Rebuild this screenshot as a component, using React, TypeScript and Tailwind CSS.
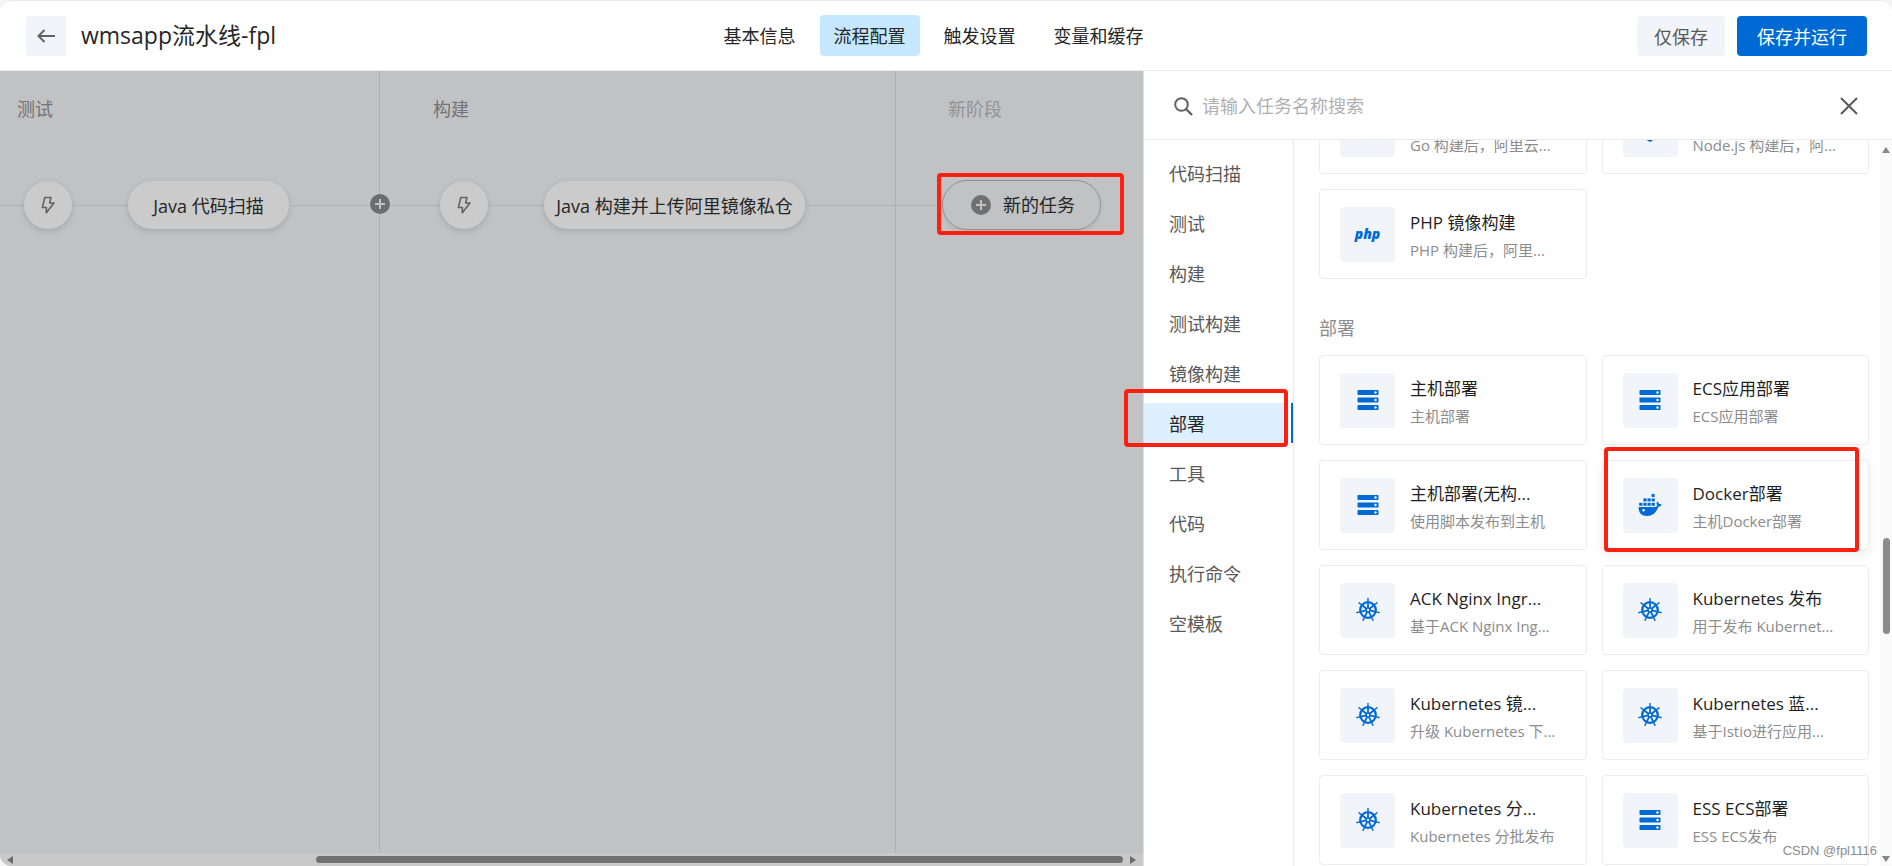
import type { ReactNode } from "react";

const navItems = ["基本信息", "流程配置", "触发设置", "变量和缓存"];

const categories = [
  "代码扫描",
  "测试",
  "构建",
  "测试构建",
  "镜像构建",
  "部署",
  "工具",
  "代码",
  "执行命令",
  "空模板",
];

type IconName = "server" | "docker" | "helm" | "php" | "go" | "node";

interface ITask {
  icon: IconName;
  title?: string;
  desc: string;
  hovered?: boolean;
}

const imageBuildTasks: ITask[] = [
  { icon: "go", desc: "Go 构建后，阿里云..." },
  { icon: "node", desc: "Node.js 构建后，阿..." },
  { icon: "php", title: "PHP 镜像构建", desc: "PHP 构建后，阿里..." },
];

const deployTasks: ITask[] = [
  { icon: "server", title: "主机部署", desc: "主机部署" },
  { icon: "server", title: "ECS应用部署", desc: "ECS应用部署" },
  { icon: "server", title: "主机部署(无构...", desc: "使用脚本发布到主机" },
  { icon: "docker", title: "Docker部署", desc: "主机Docker部署", hovered: true },
  { icon: "helm", title: "ACK Nginx Ingr...", desc: "基于ACK Nginx Ing..." },
  { icon: "helm", title: "Kubernetes 发布", desc: "用于发布 Kubernet..." },
  { icon: "helm", title: "Kubernetes 镜...", desc: "升级 Kubernetes 下..." },
  { icon: "helm", title: "Kubernetes 蓝...", desc: "基于Istio进行应用..." },
  { icon: "helm", title: "Kubernetes 分...", desc: "Kubernetes 分批发布" },
  { icon: "server", title: "ESS ECS部署", desc: "ESS ECS发布" },
];

const ServerIcon = () => (
  <svg width="22" height="22" viewBox="0 0 22 22" fill="#006ad4">
    {[1, 8.5, 16].map((y) => (
      <g key={y}>
        <rect x="0.5" y={y} width="21" height="5" rx="0.8" />
        <circle cx="18.5" cy={y + 2.5} r="1.2" fill="#fff" />
      </g>
    ))}
  </svg>
);

const DockerIcon = () => (
  <svg width="24" height="24" viewBox="0 0 24 24" fill="#006ad4">
    <rect x="13.6" y="1" width="3" height="3" />
    {[5.4, 9.5, 13.6].map((x) => (
      <rect key={x} x={x} y="5.4" width="3.2" height="3" />
    ))}
    {[1.2, 5.4, 9.5, 13.6].map((x) => (
      <rect key={x} x={x} y="9.8" width="3.2" height="3" />
    ))}
    <path d="M0.6 14h16.2c1.4 0 2.2-.7 2.4-1.7-.9-1.2-.8-2.7 0-3.8 1 .6 1.7 1.5 1.8 2.5 1-.2 2 0 2.7.5-.6 1.5-1.8 2.2-3.4 2.2C18.6 19.5 14.6 23 8.9 23 3.5 23 .4 19.6.6 14z" />
    <circle cx="5.6" cy="17.2" r="1.2" fill="#fff" />
  </svg>
);

const HelmIcon = () => (
  <svg width="24" height="24" viewBox="0 0 24 24" fill="none" stroke="#006ad4">
    <circle cx="12" cy="12" r="7.8" strokeWidth="2.2" />
    {[0, 1, 2, 3, 4, 5, 6].map((i) => (
      <g key={i} transform={`rotate(${(i * 360) / 7} 12 12)`}>
        <path d="M12 10V4" strokeWidth="1.8" />
        <path d="M12 4V0.5" strokeWidth="1.4" strokeLinecap="round" />
      </g>
    ))}
    <circle cx="12" cy="12" r="2" strokeWidth="1.6" />
  </svg>
);

const TaskIcon = ({ name }: { name: IconName }) => {
  if (name === "server") return <ServerIcon />;
  if (name === "docker") return <DockerIcon />;
  if (name === "helm") return <HelmIcon />;
  if (name === "php") {
    return (
      <span className="text-sm leading-none font-extrabold italic text-[#006ad4]">
        php
      </span>
    );
  }
  return (
    <svg width="24" height="26" viewBox="0 0 24 26" fill="#006ad4">
      {name === "node" ? (
        <path d="M12 0l10 6v14l-10 6L2 20V6z" />
      ) : (
        <path d="M3 8h18v8H3z" />
      )}
    </svg>
  );
};

const TaskCard = ({ task }: { task: ITask }) => (
  <button
    type="button"
    className={
      task.hovered
        ? "flex h-[90px] items-center gap-[15px] rounded border border-[#ebedf0] bg-white pl-5 text-left shadow-[0_4px_12px_rgba(0,0,0,0.08)]"
        : "flex h-[90px] items-center gap-[15px] rounded border border-[#ebedf0] bg-white pl-5 text-left"
    }
  >
    <span className="flex size-[55px] shrink-0 items-center justify-center rounded bg-[#f1f4f8]">
      <TaskIcon name={task.icon} />
    </span>
    <span className="flex min-w-0 flex-col pt-[3px] whitespace-nowrap">
      <span className="min-h-7 text-[17px] leading-7 text-[#1f1f1f]">
        {task.title}
      </span>
      <span className="text-[15px] leading-[26px] text-[#8c8c8c]">
        {task.desc}
      </span>
    </span>
  </button>
);

const PlusDot = ({ fill }: { fill: string }) => (
  <svg className="shrink-0" width="20" height="20" viewBox="0 0 20 20">
    <circle cx="10" cy="10" r="10" fill={fill} />
    <path d="M10 5v10M5 10h10" stroke="#c1c2c4" strokeWidth="2" />
  </svg>
);

const Trigger = () => (
  <button
    type="button"
    aria-label="触发"
    className="flex size-12 shrink-0 items-center justify-center rounded-full bg-[#cbcbcb] shadow-[0_2px_6px_rgba(0,0,0,0.14)]"
  >
    <svg
      width="16"
      height="18"
      viewBox="0 0 16 18"
      fill="none"
      stroke="#636363"
      strokeWidth="1.6"
      strokeLinejoin="round"
    >
      <path d="M4.800 1.500h6.200L9.600 7h4.400L6.300 16.700V11.500H2.300z" />
    </svg>
  </button>
);

const Wire = ({ className }: { className: string }) => (
  <span className={`h-px bg-[#aeb3b8] ${className}`} />
);

const Job = ({ children }: { children: ReactNode }) => (
  <button
    type="button"
    className="h-12 shrink-0 rounded-full bg-[#cbcbcb] pt-[2px] text-[18px] whitespace-nowrap text-[#262626] shadow-[0_2px_6px_rgba(0,0,0,0.14)]"
  >
    {children}
  </button>
);

const Canvas = () => (
  <main className="flex min-w-0 flex-1 flex-col overflow-hidden rounded-bl-xl bg-[#c1c2c4]">
    <div className="flex min-h-0 flex-1">
      <section className="relative w-[380px] shrink-0 border-r border-[#aeb0b2] pt-6">
        <h2 className="pl-[17px] text-[18px] leading-7 text-[#717375]">测试</h2>
        <div className="mt-[58px] flex items-center">
          <Wire className="w-6" />
          <Trigger />
          <Wire className="w-14" />
          <div className="flex w-[161px] flex-col">
            <Job>Java 代码扫描</Job>
          </div>
          <Wire className="flex-1" />
        </div>
        <button
          type="button"
          aria-label="添加阶段"
          className="absolute top-[123px] -right-[11px] z-10"
        >
          <PlusDot fill="#6a6e72" />
        </button>
      </section>

      <section className="w-[516px] shrink-0 border-r border-[#aeb0b2] pt-6">
        <h2 className="pl-[53px] text-[18px] leading-7 text-[#717375]">构建</h2>
        <div className="mt-[58px] flex items-center">
          <Wire className="w-15" />
          <Trigger />
          <Wire className="w-14" />
          <div className="flex w-[261px] flex-col">
            <Job>Java 构建并上传阿里镜像私仓</Job>
          </div>
          <Wire className="flex-1" />
        </div>
      </section>

      <section className="min-w-[236px] flex-1 pt-6">
        <h2 className="pl-[52px] text-[18px] leading-7 text-[#8f9398]">
          新阶段
        </h2>
        <div className="mt-[57px] flex items-center">
          <Wire className="w-[46px]" />
          <div className="relative">
            <button
              type="button"
              className="flex h-[50px] w-[159px] items-center gap-3 rounded-full border border-[#8e9194] pl-[28px] text-[18px] whitespace-nowrap text-[#262626] shadow-[0_2px_4px_rgba(0,0,0,0.08)]"
            >
              <PlusDot fill="#707070" />
              新的任务
            </button>
            <span className="pointer-events-none absolute -top-[7px] -left-[5px] h-[62px] w-[187px] rounded border-4 border-[#ff1f10]" />
          </div>
        </div>
      </section>
    </div>

    <div className="flex h-[13px] shrink-0 items-center gap-1 bg-[#c9c9c9] px-[7px]">
      <svg width="6" height="8" viewBox="0 0 6 8" fill="#6b6b6b">
        <path d="M6 0v8L0 4z" />
      </svg>
      <div className="flex flex-1 justify-end">
        <div className="h-[7px] w-[73%] rounded-full bg-[#717171]" />
      </div>
      <svg
        className="ml-[3px]"
        width="6"
        height="8"
        viewBox="0 0 6 8"
        fill="#6b6b6b"
      >
        <path d="M0 0v8l6-4z" />
      </svg>
    </div>
  </main>
);

const TaskPanel = () => (
  <aside className="flex w-[749px] shrink-0 flex-col border-l border-[#dcdfe3] bg-white">
    <div className="flex h-[69px] shrink-0 items-center border-b border-[#ebebed] pt-[2px] pr-[34px] pl-[30px]">
      <svg
        width="19"
        height="19"
        viewBox="0 0 19 19"
        fill="none"
        stroke="#636363"
        strokeWidth="2"
      >
        <circle cx="7.5" cy="7.5" r="6.3" />
        <path d="M12 12l6 6" strokeWidth="2.4" />
      </svg>
      <input
        type="text"
        aria-label="搜索任务"
        placeholder="请输入任务名称搜索"
        className="ml-[9px] min-w-0 flex-1 text-[18px] outline-none placeholder:text-[#b0b0b0]"
      />
      <button type="button" aria-label="关闭">
        <svg
          width="18"
          height="18"
          viewBox="0 0 18 18"
          stroke="#595959"
          strokeWidth="2"
        >
          <path d="M1 1l16 16M17 1L1 17" />
        </svg>
      </button>
    </div>

    <div className="flex min-h-0 flex-1">
      <nav className="flex w-[150px] shrink-0 flex-col gap-[10px] border-r border-[#ebebed] pt-[13px]">
        {categories.map((name) =>
          name === "部署" ? (
            <div key={name} className="relative flex justify-between">
              <a
                href="#"
                className="h-10 w-[144px] bg-[#dcf0ff] pl-[25px] text-[18px] leading-[42px] text-[#262626]"
              >
                {name}
              </a>
              <span className="w-[2px] bg-[#006ad4]" />
              <span className="pointer-events-none absolute -top-[14px] -left-5 z-20 h-[58px] w-[164px] rounded border-4 border-[#ff1f10]" />
            </div>
          ) : (
            <a
              key={name}
              href="#"
              className="h-10 pl-[25px] text-[18px] leading-[42px] text-[#595959]"
            >
              {name}
            </a>
          )
        )}
      </nav>

      <div className="min-w-0 flex-1 overflow-hidden pr-[11px] pl-[25px]">
        {/* list is scrolled down to the deploy group */}
        <div className="-mt-14 grid grid-cols-2 gap-[15px]">
          {imageBuildTasks.map((task) => (
            <TaskCard key={task.desc} task={task} />
          ))}
        </div>
        <h3 className="mt-[35px] mb-[13px] text-[18px] leading-7 text-[#8c8c8c]">
          部署
        </h3>
        <div className="grid grid-cols-2 gap-[15px]">
          {deployTasks.map((task) =>
            task.hovered ? (
              <div key={task.title} className="relative flex flex-col">
                <TaskCard task={task} />
                <span className="pointer-events-none absolute -top-[13px] left-[2px] h-[105px] w-[255px] rounded border-4 border-[#ff1f10]" />
              </div>
            ) : (
              <TaskCard key={task.title} task={task} />
            )
          )}
        </div>
      </div>

      <div className="flex w-3 shrink-0 flex-col items-center bg-[#fafafa] pt-[7px] pb-1">
        <svg width="8" height="6" viewBox="0 0 8 6" fill="#878787">
          <path d="M4 0l4 6H0z" />
        </svg>
        <div className="flex-[384]" />
        <div className="h-24 w-[7px] rounded-full bg-[#8b8b8b]" />
        <div className="flex-[221]" />
        <svg width="8" height="6" viewBox="0 0 8 6" fill="#878787">
          <path d="M4 6L0 0h8z" />
        </svg>
      </div>
    </div>
  </aside>
);

const Header = () => (
  <header className="flex h-[71px] shrink-0 items-center rounded-t-xl border-t border-b border-[#e9ebed] bg-white pr-[25px] pl-[26px]">
    <div className="flex flex-1 items-center gap-[15px]">
      <button
        type="button"
        aria-label="返回"
        className="flex size-10 items-center justify-center rounded bg-[#f1f4f8]"
      >
        <svg
          width="18"
          height="14"
          viewBox="0 0 18 14"
          fill="none"
          stroke="#636363"
          strokeWidth="2"
        >
          <path d="M18 7H1.500M7.500 1L1.500 7l6 6" />
        </svg>
      </button>
      <h1 className="text-[23px] whitespace-nowrap text-[#262626]">
        wmsapp流水线-fpl
      </h1>
    </div>
    <nav className="mr-[26px] flex gap-[10px] text-[18px]">
      {navItems.map((name, i) => (
        <a
          key={name}
          href="#"
          className={
            i === 1
              ? "h-[41px] rounded bg-[#c5e8ff] px-[14px] leading-[42px] text-[#262626]"
              : "h-[41px] rounded px-[14px] leading-[42px] text-[#262626]"
          }
        >
          {name}
        </a>
      ))}
    </nav>
    <div className="flex flex-1 justify-end gap-3 text-[18px]">
      <button
        type="button"
        className="h-10 rounded bg-[#f1f4f8] px-[17px] leading-[42px] whitespace-nowrap text-[#595959]"
      >
        仅保存
      </button>
      <button
        type="button"
        className="h-10 rounded bg-[#006ad4] px-5 leading-[42px] whitespace-nowrap text-white"
      >
        保存并运行
      </button>
    </div>
  </header>
);

export default function App() {
  return (
    <div className="relative flex h-screen flex-col overflow-hidden bg-[#f5f5f5] font-['Open_Sans','Noto_Sans_CJK_SC',sans-serif]">
      <Header />
      <div className="flex min-h-0 flex-1">
        <Canvas />
        <TaskPanel />
      </div>
      <span className="absolute right-[15px] bottom-[6px] font-['Liberation_Sans',sans-serif] text-[13px] text-[#8c8c8c]">
        CSDN @fpl1116
      </span>
    </div>
  );
}
